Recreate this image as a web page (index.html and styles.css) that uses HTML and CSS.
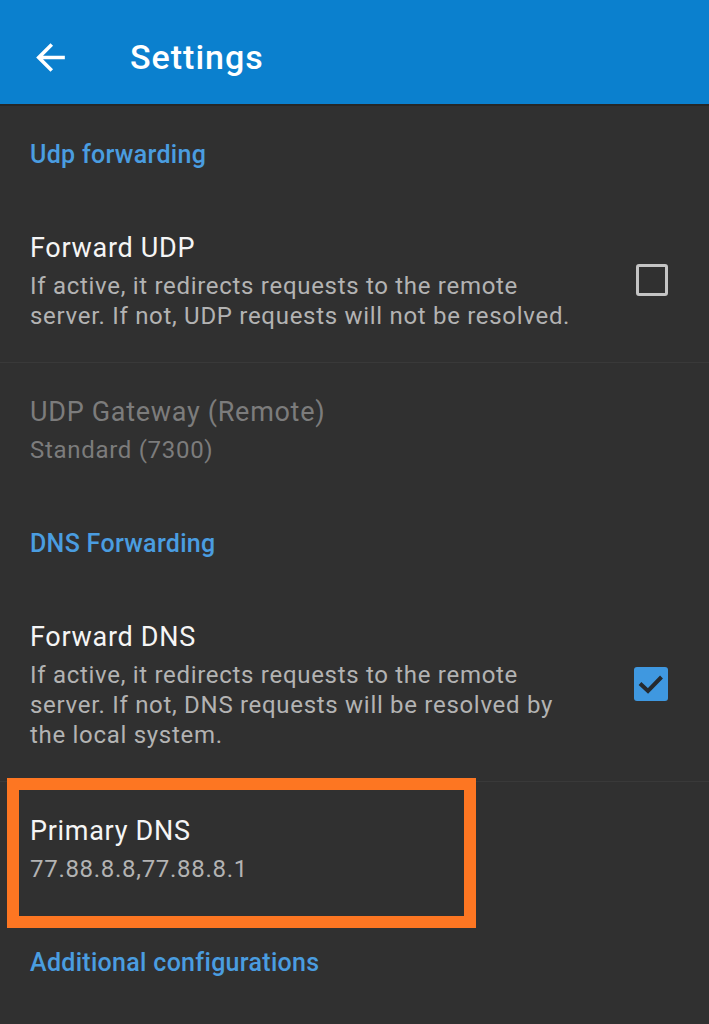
FILE: index.html
```html
<!DOCTYPE html>
<html>
<head>
    <title>Settings</title>
    <link rel="stylesheet" href="styles.css">
</head>
<body>
    <div id="app-bar">
        <svg class="back-icon" viewBox="0 0 24 24" width="43" height="43">
            <path d="M20 11H7.83l5.59-5.59L12 4l-8 8 8 8 1.41-1.41L7.83 13H20v-2z" fill="#fff"/>
        </svg>
        <h1 class="bar-title">Settings</h1>
    </div>

    <div id="prefs">
        <div class="category">Udp forwarding</div>

        <div class="pref divided">
            <div class="pref-text">
                <div class="pref-title">Forward UDP</div>
                <div class="pref-summary">If active, it redirects requests to the remote<br>server. If not, UDP requests will not be resolved.</div>
            </div>
            <div class="checkbox"></div>
        </div>

        <div class="pref disabled compact">
            <div class="pref-text">
                <div class="pref-title">UDP Gateway (Remote)</div>
                <div class="pref-summary">Standard (7300)</div>
            </div>
        </div>

        <div class="category">DNS Forwarding</div>

        <div class="pref divided">
            <div class="pref-text">
                <div class="pref-title">Forward DNS</div>
                <div class="pref-summary">If active, it redirects requests to the remote<br>server. If not, DNS requests will be resolved by<br>the local system.</div>
            </div>
            <div class="checkbox checked">
                <svg viewBox="0 0 34 34" width="34" height="34">
                    <path d="M6 16.5l8 7.5 13.5-14" fill="none" stroke="#262a2e" stroke-width="4"/>
                </svg>
            </div>
        </div>

        <div class="pref compact highlight-row">
            <div class="pref-text">
                <div class="pref-title">Primary DNS</div>
                <div class="pref-summary">77.88.8.8,77.88.8.1</div>
            </div>
            <div class="highlight"></div>
        </div>

        <div class="category">Additional configurations</div>
    </div>
</body>
</html>
```

FILE: styles.css
```css
body {
    margin: 0;
    background-color: #303030;
    font-family: Roboto, "Noto Sans", sans-serif;
    width: 709px;
    height: 1024px;
    overflow: hidden;
}

#app-bar {
    height: 106px;
    background-color: #0b80ce;
    display: flex;
    align-items: center;
    border-bottom: 2px solid #262626;
    box-sizing: border-box;
}

.back-icon {
    margin-left: 29px;
    margin-top: 10px;
}

.bar-title {
    margin: 10px 0 0 58px;
    font-size: 34px;
    font-weight: 500;
    letter-spacing: 1px;
    color: #fff;
}

#prefs {
    display: flex;
    flex-direction: column;
}

.category {
    padding: 33px 30px 31px;
    line-height: 32px;
    font-size: 25px;
    font-weight: 500;
    letter-spacing: 0.3px;
    color: #4a9de0;
}

.pref {
    display: flex;
    align-items: center;
    padding: 26px 41px 31px 30px;
}

.pref.compact {
    padding-top: 29px;
    padding-bottom: 30px;
}

.pref.divided {
    border-bottom: 1px solid #393939;
}

.pref-text {
    flex: 1;
}

.pref-title {
    font-size: 27px;
    line-height: 40px;
    letter-spacing: 0.7px;
    color: #f5f5f5;
}

.pref-summary {
    margin-top: 3px;
    font-size: 24px;
    line-height: 30px;
    letter-spacing: 0.7px;
    color: #b3b3b3;
}

.disabled .pref-title,
.disabled .pref-summary {
    color: #7c7c7c;
}

.checkbox {
    width: 32px;
    height: 32px;
    box-sizing: border-box;
    border: 3px solid #c4c4c4;
    border-radius: 3px;
}

.checkbox.checked {
    width: 34px;
    height: 34px;
    border: none;
    background-color: #3f98e0;
}

.checkbox svg {
    display: block;
}

.highlight-row {
    position: relative;
}

.highlight {
    position: absolute;
    left: 7px;
    top: -4px;
    width: 469px;
    height: 150px;
    box-sizing: border-box;
    border: 12px solid #fd7622;
}
```
